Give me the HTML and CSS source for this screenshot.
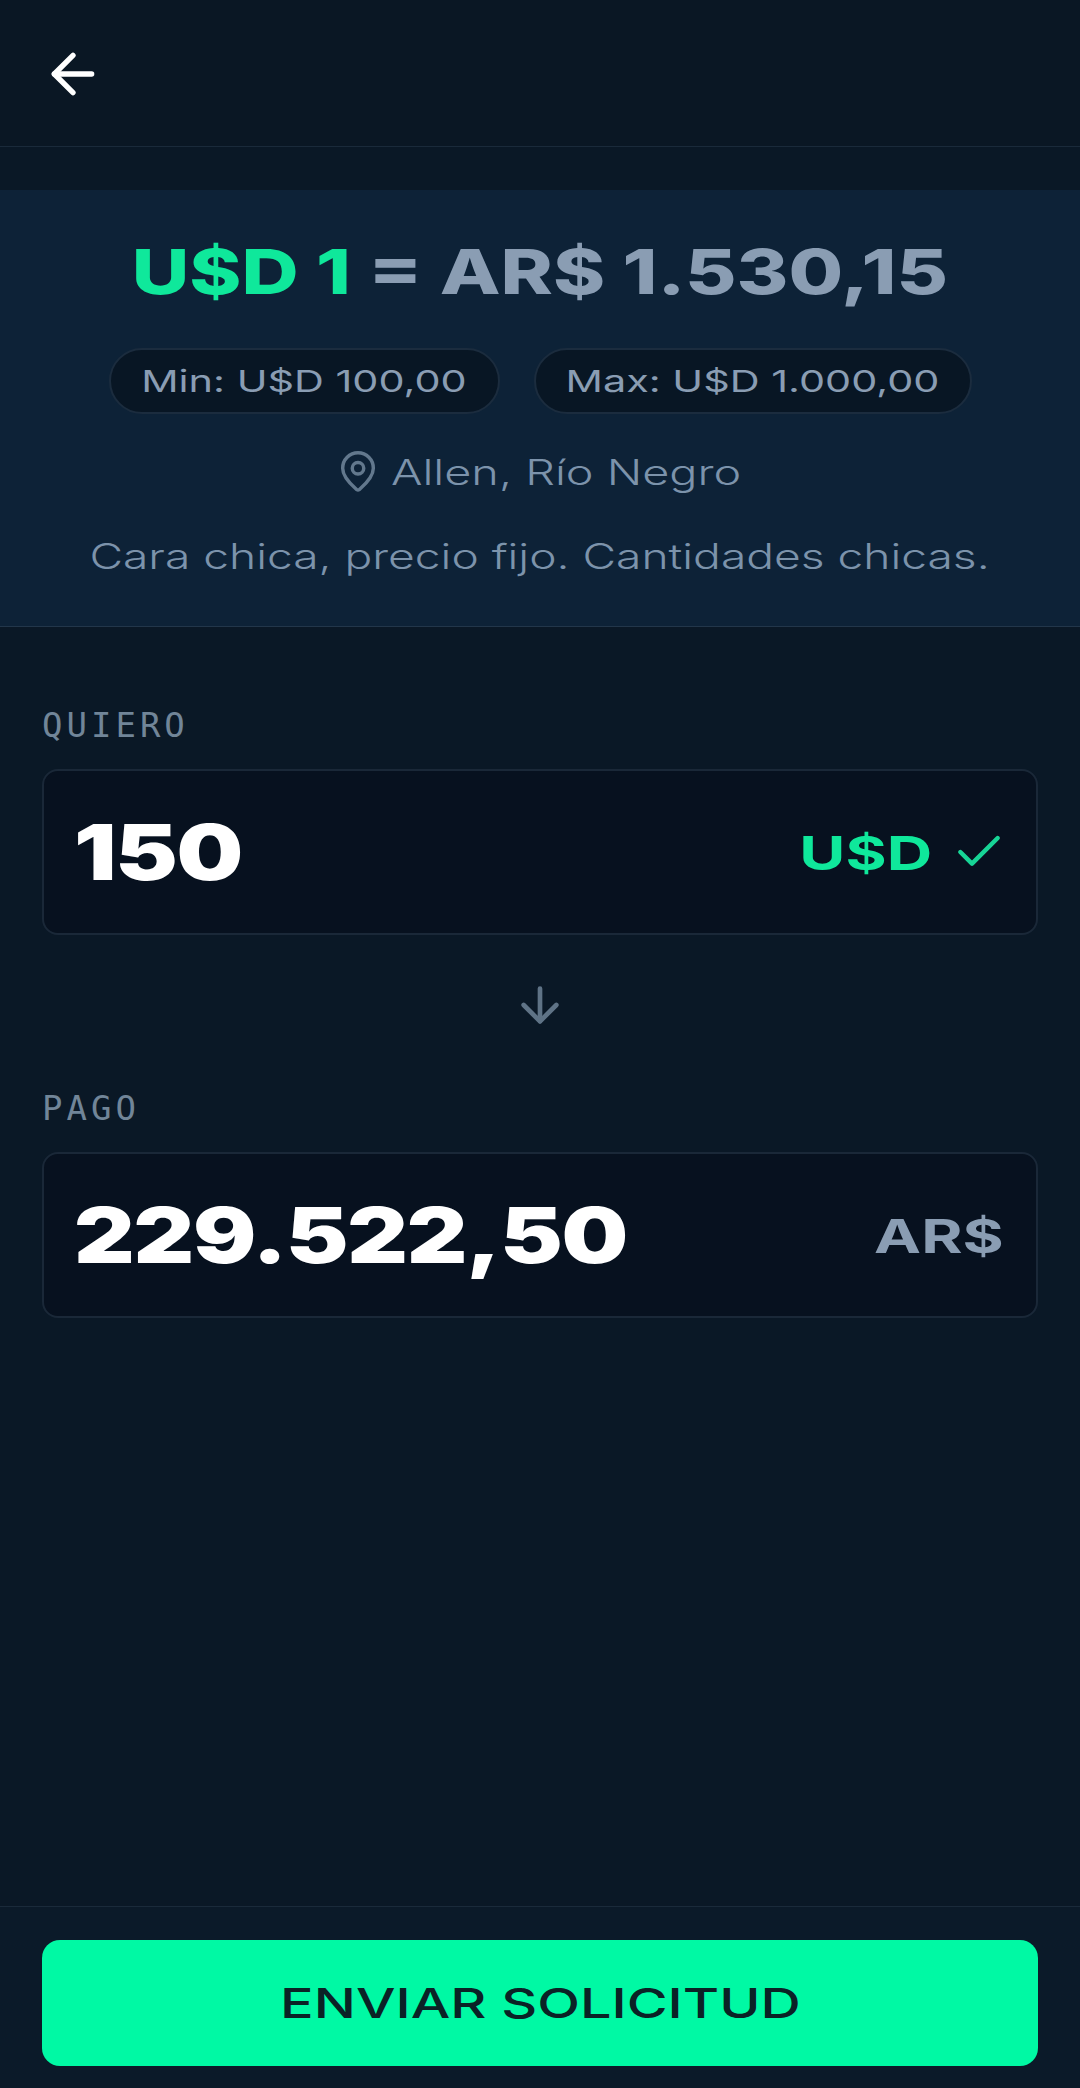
FILE: index.html
```html
<!DOCTYPE html>
<html lang="es">
<head>
  <meta charset="UTF-8">
  <title>Enviar solicitud</title>
  <link rel="stylesheet" href="styles.css">
</head>
<body>

  <header class="topbar">
    <svg class="back-icon" viewBox="0 0 24 24"><path d="M19 12H5"/><path d="M12 19l-7-7 7-7"/></svg>
  </header>

  <section class="offer">
    <div class="rate"><span class="rate-text"><span class="rate-base">U$D 1</span> = AR$ 1.530,15</span></div>
    <div class="limits">
      <div class="pill pill-min"><span class="pill-text">Min: U$D 100,00</span></div>
      <div class="pill pill-max"><span class="pill-text">Max: U$D 1.000,00</span></div>
    </div>
    <div class="place">
      <svg class="pin-icon" viewBox="0 0 24 24"><path d="M20 10c0 5-5.5 9.5-7.4 11.2a1 1 0 0 1-1.2 0C9.5 19.5 4 15 4 10a8 8 0 0 1 16 0"/><circle cx="12" cy="10" r="3"/></svg>
      <span class="place-text">Allen, Río Negro</span>
    </div>
    <p class="note"><span class="note-text">Cara chica, precio fijo. Cantidades chicas.</span></p>
  </section>

  <main class="form">
    <div class="label label-first">QUIERO</div>
    <div class="field">
      <span class="amount">150</span>
      <div class="unit">
        <span class="currency currency-on">U$D</span>
        <svg class="check-icon" viewBox="0 0 24 24"><path d="M20 6 9 17l-5-5"/></svg>
      </div>
    </div>

    <div class="swap">
      <svg class="down-icon" viewBox="0 0 24 24"><path d="M12 5v14"/><path d="M19 12l-7 7-7-7"/></svg>
    </div>

    <div class="label">PAGO</div>
    <div class="field">
      <span class="amount">229.522,50</span>
      <div class="unit">
        <span class="currency">AR$</span>
      </div>
    </div>
  </main>

  <footer class="actions">
    <button class="send-btn"><span class="send-text">ENVIAR SOLICITUD</span></button>
  </footer>

</body>
</html>
```

FILE: styles.css
```css
body {
  margin: 0;
  width: 1080px;
  height: 2088px;
  display: flex;
  flex-direction: column;
  background: #0a1826;
  font-family: Inter, "Liberation Sans", sans-serif;
  overflow: hidden;
}
svg {
  display: block;
  fill: none;
  stroke-linecap: round;
  stroke-linejoin: round;
}

.topbar {
  height: 147px;
  padding: 42px 41px 0;
  box-sizing: border-box;
  background: #0a1724;
  border-bottom: 1px solid #1a2a3a;
}
.back-icon {
  width: 64px;
  height: 64px;
  stroke: #fff;
  stroke-width: 2;
}

.offer {
  margin-top: 43px;
  padding: 46px 0 41px;
  background: #0d2237;
  border-bottom: 1px solid #22364a;
  text-align: center;
}
.rate {
  display: flex;
  justify-content: center;
  line-height: 72px;
}
.rate-text {
  display: inline-block;
  font-size: 62px;
  font-weight: 800;
  color: #8a9db3;
  white-space: nowrap;
  transform: scaleX(1.276);
}
.rate-base {
  color: #0fe89b;
}
.limits {
  display: flex;
  justify-content: center;
  gap: 34px;
  margin-top: 40px;
}
.pill {
  height: 66px;
  box-sizing: border-box;
  display: flex;
  align-items: center;
  justify-content: center;
  background: #081624;
  border: 2px solid #1b2c3e;
  border-radius: 33px;
  white-space: nowrap;
}
.pill-min { width: 391px; }
.pill-max { width: 438px; }
.pill-text {
  display: inline-block;
  font-size: 30px;
  color: #8a9db3;
  transform: scaleX(1.38);
}
.place {
  display: flex;
  justify-content: center;
  align-items: center;
  height: 44px;
  margin-top: 36px;
}
.pin-icon {
  width: 46px;
  height: 46px;
  stroke: #62788d;
  stroke-width: 1.8;
}
.place-text {
  display: inline-block;
  margin: 0 48px 0 54px;
  font-size: 35px;
  font-weight: 300;
  color: #7c93ab;
  transform: scaleX(1.336);
  white-space: nowrap;
}
.note {
  margin: 40px 0 0;
  line-height: 44px;
}
.note-text {
  display: inline-block;
  font-size: 35px;
  font-weight: 300;
  color: #7c93ab;
  transform: scaleX(1.318);
  white-space: nowrap;
}

.form {
  flex: 1;
  padding: 78px 42px 0;
}
.label {
  font-family: "DejaVu Sans Mono", "Liberation Mono", monospace;
  font-size: 34px;
  line-height: 40px;
  letter-spacing: 4px;
  color: #718598;
  margin-bottom: 24px;
}
.field {
  height: 166px;
  box-sizing: border-box;
  display: flex;
  align-items: center;
  justify-content: space-between;
  padding: 0 32px 0 30px;
  background: #07111f;
  border: 2px solid #1a2838;
  border-radius: 16px;
}
.amount {
  display: inline-block;
  font-size: 77px;
  font-weight: 900;
  letter-spacing: -1px;
  color: #fff;
  transform: scaleX(1.22);
  transform-origin: left center;
  white-space: nowrap;
}
.unit {
  display: flex;
  align-items: center;
  gap: 19px;
}
.currency {
  display: inline-block;
  font-size: 47px;
  font-weight: 700;
  color: #8a9db3;
  transform: scaleX(1.34);
  transform-origin: right center;
}
.currency-on {
  color: #0fe89b;
}
.check-icon {
  width: 56px;
  height: 56px;
  stroke: #17d596;
  stroke-width: 1.9;
  margin-right: -3px;
}
.swap {
  height: 153px;
  display: flex;
  justify-content: center;
  padding-top: 42px;
  box-sizing: border-box;
}
.down-icon {
  width: 56px;
  height: 56px;
  stroke: #5f7386;
  stroke-width: 2;
}

.actions {
  padding: 33px 42px 22px;
  background: #0b1a29;
  border-top: 1px solid #1a2a3a;
}
.send-btn {
  display: flex;
  align-items: center;
  justify-content: center;
  width: 100%;
  height: 126px;
  padding: 0;
  border: none;
  border-radius: 18px;
  background: #00f9a4;
  font-family: inherit;
}
.send-text {
  display: inline-block;
  font-size: 41px;
  font-weight: 500;
  color: #0b2226;
  transform: scaleX(1.36);
  white-space: nowrap;
}
```
